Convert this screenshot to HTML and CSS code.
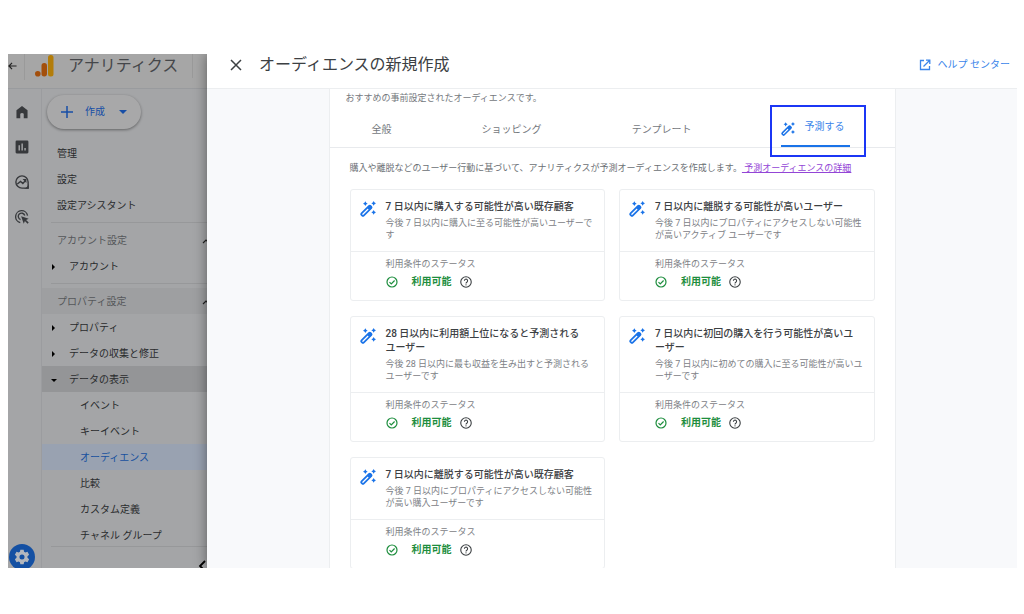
FILE: index.html
```html
<!DOCTYPE html>
<html lang="ja">
<head>
<meta charset="utf-8">
<title>オーディエンスの新規作成</title>
<link rel="stylesheet" href="styles.css">
</head>
<body>
<svg class="defs" aria-hidden="true">
  <symbol id="wand" viewBox="0 0 24 24">
    <path fill="none" stroke="currentColor" stroke-width="2.6" stroke-linejoin="round" d="M2.300 18.700 13.600 7.400a1.500 1.500 0 0 1 2.100 0l1.100 1.100a1.500 1.500 0 0 1 0 2.100L5.500 21.900a1.500 1.500 0 0 1-2.100 0l-1.100-1.100a1.500 1.500 0 0 1 0-2.100z"/>
    <path fill="currentColor" d="m10.500 10.500 3.500-3.500q1-.8 2 0l1.500 1.500q.8 1 0 2L14 14zM8 .5l1.300 2.200L11.500 4 9.300 5.300 8 7.500 6.700 5.300 4.500 4l2.200-1.300zM20.500 0l1.300 2.200L24 3.500l-2.200 1.300L20.500 7l-1.300-2.200L17 3.500l2.200-1.300zM20.500 13.500l1.300 2.200L24 17l-2.200 1.300-1.300 2.200-1.300-2.200L17 17l2.200-1.300z"/>
  </symbol>
  <symbol id="check" viewBox="0 0 24 24">
    <g fill="none" stroke="currentColor" stroke-width="2.400"><circle cx="12" cy="12" r="10"/><path d="m7 12.200 3.500 3.500L17.200 9"/></g>
  </symbol>
  <symbol id="help" viewBox="0 0 24 24">
    <g fill="none" stroke="currentColor" stroke-width="2.200"><circle cx="12" cy="12" r="10.500"/><path d="M8.800 9.500a3.200 3.200 0 1 1 5.200 2.500c-1.200.9-2 1.500-2 3"/></g>
    <circle cx="12" cy="17.700" r="1.300" fill="currentColor"/>
  </symbol>
</svg>
<div class="frame">
  <div class="app">
    <header class="app-bar">
      <button class="icon-button back" aria-label="戻る"><svg viewBox="0 0 10 10"><path fill="none" stroke="currentColor" stroke-width="1.300" d="M9.500 5H1M4.500 1.500 1 5l3.500 3.500"/></svg></button>
      <svg class="logo" viewBox="0 0 19 22" aria-hidden="true"><rect x="13" y="0" width="5.500" height="21.500" rx="2.500" fill="#b37d0a"/><rect x="6.500" y="8" width="5.500" height="13.500" rx="2.700" fill="#a34f0c"/><circle cx="2.800" cy="18.700" r="2.800" fill="#a34f0c"/></svg>
      <span class="product">アナリティクス</span>
    </header>
    <div class="app-body">
      <nav class="rail" aria-label="メイン">
        <button class="icon-button" aria-label="ホーム"><svg viewBox="0 0 24 24"><path fill="currentColor" d="M2.500 22.500V9L12 1.500 21.500 9v13.500H15V15q-3-3-6 0v7.500z"/></svg></button>
        <button class="icon-button" aria-label="レポート"><svg viewBox="0 0 24 24"><path fill="currentColor" fill-rule="evenodd" d="M3 1h18q2 0 2 2v18q0 2-2 2H3q-2 0-2-2V3q0-2 2-2zm3 8v9h2.500V9zm5-3v12h2.500V6zm5 7.500V18h2.500v-4.500z"/></svg></button>
        <button class="icon-button" aria-label="探索"><svg viewBox="0 0 24 24"><path fill="none" stroke="currentColor" stroke-width="2.400" d="M22.500 12A10.500 10.500 0 1 0 12 22.500h10.500zM4 15.500l5.500-4.500 4 3.500 4.500-5"/><path fill="currentColor" d="M13 7h6.500v6.500zM23.500 15v8.500H15q6.500-2 8.500-8.500z"/></svg></button>
        <button class="icon-button" aria-label="広告"><svg viewBox="0 0 24 24"><path fill="none" stroke="currentColor" stroke-width="2.300" d="M9 21.500A10.300 10.300 0 1 1 21.500 9.500M9.500 16.500A5.700 5.700 0 1 1 16.800 9.500"/><path fill="currentColor" d="m10.500 10.500 13 4.500-4.500 2 4.500 4.500-2 2L17 19l-2 4.500z"/></svg></button>
        <button class="icon-button gear" aria-label="管理"><svg viewBox="0 0 24 24"><path fill="currentColor" fill-rule="evenodd" d="m9.500 1-.6 3.200-2 1.200-3.100-1.100-2.500 4.400 2.500 2.100v2.400l-2.500 2.100 2.500 4.400 3.100-1.100 2 1.200.6 3.200h5l.6-3.200 2-1.200 3.100 1.100 2.500-4.400-2.500-2.100v-2.400l2.500-2.100-2.500-4.400-3.100 1.100-2-1.200-.6-3.200zM12 8.200a3.800 3.800 0 1 1 0 7.600 3.800 3.800 0 0 1 0-7.600z"/></svg></button>
      </nav>
      <nav class="side" aria-label="管理メニュー">
        <button class="create"><svg viewBox="0 0 12 12"><path stroke="currentColor" stroke-width="1.500" d="M6 0v12M0 6h12"/></svg><span>作成</span><i class="caret down"></i></button>
        <a class="item" href="#">管理</a>
        <a class="item" href="#">設定</a>
        <a class="item" href="#">設定アシスタント</a>
        <hr>
        <button class="item heading">アカウント設定<svg viewBox="0 0 8 8"><path fill="none" stroke="currentColor" stroke-width="1.200" d="m1 6 3-3 3 3"/></svg></button>
        <button class="item group"><i class="caret"></i>アカウント</button>
        <hr>
        <button class="item heading shaded">プロパティ設定<svg viewBox="0 0 8 8"><path fill="none" stroke="currentColor" stroke-width="1.200" d="m1 6 3-3 3 3"/></svg></button>
        <button class="item group"><i class="caret"></i>プロパティ</button>
        <button class="item group"><i class="caret"></i>データの収集と修正</button>
        <button class="item group open"><i class="caret down"></i>データの表示</button>
        <a class="item sub" href="#">イベント</a>
        <a class="item sub" href="#">キーイベント</a>
        <a class="item sub current" href="#">オーディエンス</a>
        <a class="item sub" href="#">比較</a>
        <a class="item sub" href="#">カスタム定義</a>
        <a class="item sub" href="#">チャネル グループ</a>
        <div class="side-foot"><button class="icon-button" aria-label="閉じる"><svg viewBox="0 0 8 12"><path fill="none" stroke="currentColor" stroke-width="1.800" d="M7 1 2 6l5 5"/></svg></button></div>
      </nav>
    </div>
  </div>

  <main class="dialog">
    <header class="dialog-bar">
      <button class="icon-button close" aria-label="閉じる"><svg viewBox="0 0 12 12"><path stroke="currentColor" stroke-width="1.500" d="m1 1 10 10M11 1 1 11"/></svg></button>
      <h1>オーディエンスの新規作成</h1>
      <a class="help-link" href="#"><svg viewBox="0 0 12 12"><path fill="none" stroke="currentColor" stroke-width="1.300" d="M5 1.500H1.500v9h9V7M7 1.200h3.800V5M10.500 1.500 4.500 7.500"/></svg>ヘルプ センター</a>
    </header>
    <div class="dialog-body">
      <section class="panel">
        <p class="lead">おすすめの事前設定されたオーディエンスです。</p>
        <div class="tabs" role="tablist">
          <button class="tab" role="tab">全般</button>
          <button class="tab" role="tab">ショッピング</button>
          <button class="tab" role="tab">テンプレート</button>
          <button class="tab active" role="tab" aria-selected="true"><svg><use href="#wand"/></svg><span>予測する</span></button>
        </div>
        <p class="intro">購入や離脱などのユーザー行動に基づいて、アナリティクスが予測オーディエンスを作成します。<a href="#">&nbsp;予測オーディエンスの詳細</a></p>
        <div class="cards">
          <article class="card">
            <div class="card-top"><svg><use href="#wand"/></svg><h2>7 日以内に購入する可能性が高い既存顧客</h2><p>今後 7 日以内に購入に至る可能性が高いユーザーで<br>す</p></div>
            <div class="card-status"><p>利用条件のステータス</p><div class="state"><svg><use href="#check"/></svg><strong>利用可能</strong><button class="icon-button" aria-label="ヘルプ"><svg><use href="#help"/></svg></button></div></div>
          </article>
          <article class="card">
            <div class="card-top"><svg><use href="#wand"/></svg><h2>7 日以内に離脱する可能性が高いユーザー</h2><p>今後 7 日以内にプロパティにアクセスしない可能性<br>が高いアクティブ ユーザーです</p></div>
            <div class="card-status"><p>利用条件のステータス</p><div class="state"><svg><use href="#check"/></svg><strong>利用可能</strong><button class="icon-button" aria-label="ヘルプ"><svg><use href="#help"/></svg></button></div></div>
          </article>
          <article class="card">
            <div class="card-top"><svg><use href="#wand"/></svg><h2>28 日以内に利用額上位になると予測される<br>ユーザー</h2><p>今後 28 日以内に最も収益を生み出すと予測される<br>ユーザーです</p></div>
            <div class="card-status"><p>利用条件のステータス</p><div class="state"><svg><use href="#check"/></svg><strong>利用可能</strong><button class="icon-button" aria-label="ヘルプ"><svg><use href="#help"/></svg></button></div></div>
          </article>
          <article class="card">
            <div class="card-top"><svg><use href="#wand"/></svg><h2>7 日以内に初回の購入を行う可能性が高いユ<br>ーザー</h2><p>今後 7 日以内に初めての購入に至る可能性が高いユ<br>ーザーです</p></div>
            <div class="card-status"><p>利用条件のステータス</p><div class="state"><svg><use href="#check"/></svg><strong>利用可能</strong><button class="icon-button" aria-label="ヘルプ"><svg><use href="#help"/></svg></button></div></div>
          </article>
          <article class="card">
            <div class="card-top"><svg><use href="#wand"/></svg><h2>7 日以内に離脱する可能性が高い既存顧客</h2><p>今後 7 日以内にプロパティにアクセスしない可能性<br>が高い購入ユーザーです</p></div>
            <div class="card-status"><p>利用条件のステータス</p><div class="state"><svg><use href="#check"/></svg><strong>利用可能</strong><button class="icon-button" aria-label="ヘルプ"><svg><use href="#help"/></svg></button></div></div>
          </article>
        </div>
      </section>
    </div>
  </main>
</div>
</body>
</html>
```
FILE: styles.css
```css
* { box-sizing: border-box; }
body {
  margin: 0;
  height: 100vh;
  padding: 54px 7px 46px 8px;
  background: #fff;
  color: #3c4043;
  font: 10px/14px Roboto, "Noto Sans CJK JP", sans-serif;
}
h1, h2, p { margin: 0; font-weight: 400; }
button { font: inherit; color: inherit; background: none; border: 0; padding: 0; margin: 0; text-align: left; cursor: pointer; }
a { color: inherit; text-decoration: none; }
svg { display: block; flex: none; }
.defs { display: none; }
.icon-button { display: grid; place-items: center; flex: none; }

.frame { display: flex; height: 100%; overflow: hidden; }

.app { flex: none; width: 199px; display: flex; flex-direction: column; background: #a4a5a7; color: #292b2d; overflow: hidden; }
.app-bar { flex: none; height: 35px; display: flex; align-items: center; padding-bottom: 10px; background: #a6a6a6; border-bottom: 1px solid #999b9e; }
.back { width: 17px; height: 28px; border-right: 1px solid #9a9a9a; justify-content: start; color: #222; }
.back svg { width: 9px; height: 10px; }
.logo { width: 19px; height: 22px; margin: 0 14px 0 10px; }
.product { flex: none; width: 125px; border-right: 1px solid #9a9a9a; font-size: 16px; line-height: 24px; color: #45474a; white-space: nowrap; }
.app-body { flex: 1; min-height: 0; display: flex; }
.rail { flex: none; width: 34px; display: flex; flex-direction: column; align-items: center; gap: 21px; padding: 16px 6px 0 0; border-right: 1px solid #9b9c9f; color: #37393c; }
.rail svg { width: 14px; height: 14px; }
.rail .gear { width: 26px; height: 26px; margin-top: auto; margin-bottom: -2px; border-radius: 50%; background: #1450a3; color: #b3b7be; }
.rail .gear svg { width: 16px; height: 16px; }
.side { flex: 1; display: flex; flex-direction: column; padding-top: 6px; white-space: nowrap; }
.create { flex: none; display: flex; align-items: center; width: 94px; height: 34px; margin: 0 0 11px 5px; padding: 0 14px; border-radius: 17px; background: #a8a8a9; color: #174ea6; box-shadow: 0 1px 3px rgba(0,0,0,.4); }
.create svg { width: 12px; height: 12px; margin-right: 12px; }
.create .caret { margin-left: auto; }
.caret { flex: none; border: 3px solid transparent; border-left: 4px solid currentColor; border-right: 0; }
.caret.down { border: 3px solid transparent; border-top: 4px solid currentColor; border-bottom: 0; }
.create .caret.down { border-left-width: 4px; border-right-width: 4px; }
.item { flex: none; height: 26px; display: flex; align-items: center; padding: 2px 0 0 15px; }
.heading { color: #55575a; }
.heading svg { width: 8px; height: 8px; margin-left: auto; margin-right: -3px; color: #222; }
.shaded { background: #9e9fa1; }
.group { padding-left: 10px; gap: 14px; }
.group .caret { border-width: 3px 0 3px 3px; color: #000; }
.group .caret.down { border-width: 3px 3px 0; margin: 0 -2px 0 -1px; }
.open { background: #949597; }
.sub { padding-left: 38px; }
.current { background: #99a2b1; color: #17509f; }
.side hr { flex: none; width: calc(100% - 9px); height: 1px; margin: 4px 0 4px 9px; border: 0; background: #97989a; }
.side-foot { flex: none; margin: -2px 0 0 9px; padding: 13px 1px 0 0; border-top: 1px solid #97989a; display: flex; justify-content: flex-end; color: #000; }
.side-foot svg { width: 8px; height: 12px; }

.dialog { flex: 1; min-width: 0; display: flex; flex-direction: column; background: #f8f9fb; box-shadow: 0 0 12px rgba(0,0,0,.45); z-index: 1; }
.dialog-bar { flex: none; height: 35px; display: flex; align-items: center; padding: 0 7px 12px 23px; background: #fff; border-bottom: 1px solid #eceef0; }
.close svg { width: 12px; height: 12px; }
.dialog-bar h1 { margin-left: 17px; font-size: 16px; line-height: 24px; }
.help-link { display: flex; align-items: center; gap: 7px; margin-left: auto; color: #3b85ea; }
.help-link svg { width: 12px; height: 12px; }
.dialog-body { flex: 1; min-height: 0; padding: 0 15%; overflow: hidden; }
.panel { background: #fff; border: solid #eceef0; border-width: 0 1px; min-height: 100%; }
.lead { padding: 3px 16px 0; font-size: 9px; line-height: 12px; color: #74787d; }
.tabs { display: flex; justify-content: space-between; height: 44px; padding: 0 44px 0 42px; border-bottom: 1px solid #e8eaed; color: #74787d; }
.tab { padding-top: 8px; }
.tab.active { position: relative; display: flex; align-items: center; gap: 9px; padding: 4px 6px 0 0; border-bottom: 2px solid #1a73e8; color: #3b85ea; }
.tab.active::after { content: ""; position: absolute; inset: 1px -16px -12px -11px; border: 2px solid #1b36f5; }
.tab svg { width: 14px; height: 14px; margin-top: 4px; color: #1a73e8; }
.intro { padding: 14px 20px 15px; font-size: 9px; line-height: 12px; color: #6b6f74; white-space: nowrap; }
.intro a { color: #9345d6; text-decoration: underline; }
.cards { display: grid; grid-template-columns: 1fr 1fr; gap: 15px 14px; padding: 0 20px; }
.card { border: 1px solid #eceef0; border-radius: 3px; white-space: nowrap; }
.card-top { display: grid; grid-template-columns: 16px 1fr; column-gap: 10px; row-gap: 3px; padding: 10px 9px; border-bottom: 1px solid #eceef0; }
.card-top svg { width: 16px; height: 16px; color: #1a73e8; margin-top: 1px; margin-bottom: -8px; }
.card-top h2 { font-size: 10px; line-height: 14px; font-weight: 500; color: #3c4043; }
.card-top p { grid-column: 2; font-size: 9px; line-height: 12px; color: #7d8186; }
.card-status { padding: 6px 9px 11px 35px; }
.card-status p { font-size: 9px; line-height: 12px; color: #7d8186; }
.state { display: flex; align-items: center; margin-top: 5px; color: #1e8e3e; }
.state svg { width: 12px; height: 12px; }
.state strong { margin: 0 8px 0 14px; font-weight: 700; }
.state button { color: #3c4043; }
```
